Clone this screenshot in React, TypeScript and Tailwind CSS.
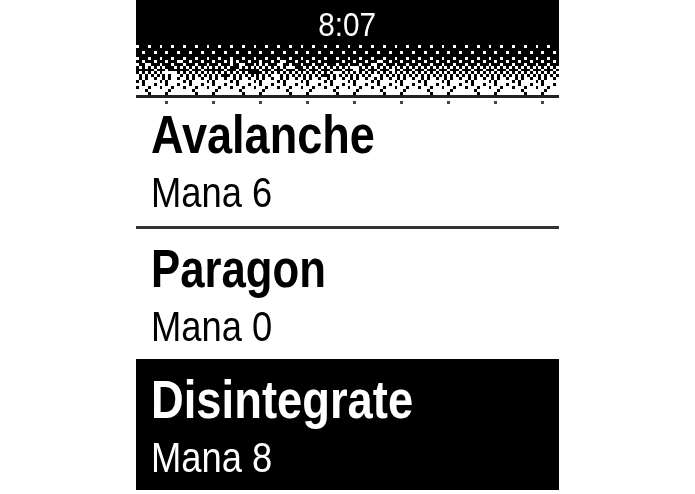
import React from 'react';

// 8px repeating dither, one string per row of the band, '#' is a white pixel
const PATTERN = [
  '#...#...',
  '........',
  '..#...#.',
  '........',
  '#...#...',
  '..#...#.',
  '#...#...',
  '.#.#.#.#',
  '..#...#.',
  '.#.#.#.#',
  '#.#.#.#.',
  '#.#.##.#',
  '.#.#####',
  '##.###.#',
  '.###.###',
  '###.####',
  '########',
];

function DitherBand() {
  const cells: React.ReactNode[] = [];
  PATTERN.forEach((row, y) => {
    for (let x = 0; x < 144; x++) {
      let on = row[x % 8] === '#';
      // the left side of the band is rougher
      if (x < 88 && y > 4 && y < 11 && (x * 7 + y * 13 + ((x * y) % 5)) % 17 === 0) on = !on;
      if (y === 16 && (x % 16 === 4 || x % 16 === 10)) on = false;
      if (on) cells.push(<rect key={`${x}-${y}`} x={x} y={y} width={1} height={1} fill="#fff" />);
    }
  });
  return (
    <div className="overflow-hidden h-[50px]">
      <svg viewBox="0 0 144 17" width={423} height={50} className="block blur-[0.5px]" shapeRendering="crispEdges">
        <rect width={144} height={17} fill="#000" />
        {cells}
      </svg>
    </div>
  );
}

function TickRuler() {
  const marks: React.ReactNode[] = [];
  for (let i = 0; i < 9; i++) {
    marks.push(<rect key={i} x={10 + i * 16} y={2} width={1} height={1} fill="#444" />);
  }
  return (
    <svg viewBox="0 0 144 3" width={423} height={9} className="block blur-[0.4px]" shapeRendering="crispEdges">
      <rect width={144} height={1} fill="#222" />
      {marks}
    </svg>
  );
}

function SpellRow({ name, mana, squeeze, active, rowClass }: { name: string; mana: number; squeeze: string; active?: boolean; rowClass: string }) {
  return (
    <div className={`flex flex-col pl-[15px] overflow-hidden ${rowClass} ${active ? 'bg-black text-white' : 'bg-white text-black'}`}>
      <div className={`text-[54px] leading-[62px] font-bold whitespace-nowrap origin-left blur-[0.4px] [font-family:'Liberation_Sans',sans-serif] ${squeeze}`}>
        {name}
      </div>
      <div className="mt-[2px] text-[43px] leading-[50px] whitespace-nowrap origin-left scale-x-[0.845] blur-[0.4px] [font-family:'Liberation_Sans',sans-serif]">
        Mana {mana}
      </div>
    </div>
  );
}

export default function App() {
  return (
    <div className="w-[695px] h-[494px] bg-white flex justify-center overflow-hidden">
      <div className="w-[423px] flex flex-col">
        <div className="h-[45px] bg-black text-white flex items-start justify-center pt-[6px]">
          <span className="text-[33px] leading-[38px] scale-x-[0.9] blur-[0.4px] [font-family:'Liberation_Sans',sans-serif]">8:07</span>
        </div>
        <DitherBand />
        <TickRuler />
        <div className="-mt-[1px]">
          <SpellRow name="Avalanche" mana={6} squeeze="scale-x-[0.835]" rowClass="h-[123px]" />
        </div>
        <div className="h-[3px] bg-[#333]" />
        <SpellRow name="Paragon" mana={0} squeeze="scale-x-[0.81]" rowClass="h-[130px] pt-[8px]" />
        <SpellRow name="Disintegrate" mana={8} squeeze="scale-x-[0.84]" active rowClass="h-[131px] pt-[9px]" />
      </div>
    </div>
  );
}
